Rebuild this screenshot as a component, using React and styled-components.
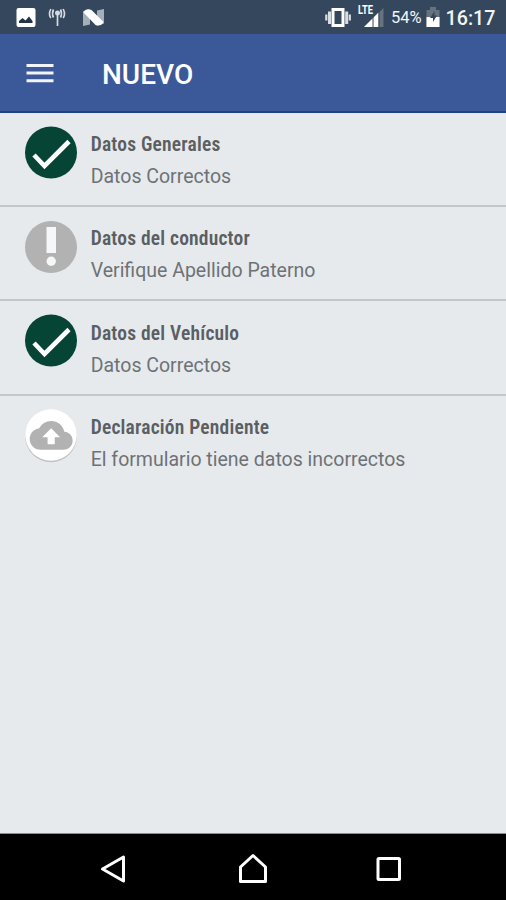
import React from "react";
import styled, { createGlobalStyle } from "styled-components";

const GlobalStyle = createGlobalStyle`
  * { box-sizing: border-box; }
  body { margin: 0; background: #e6eaed; font-family: Roboto, sans-serif; }
  svg { display: block; flex: none; }
`;

const Screen = styled.div`
  display: flex;
  flex-direction: column;
  width: 506px;
  height: 900px;
  background: #e6eaed;
  overflow: hidden;
`;

const StatusBar = styled.header`
  display: flex;
  align-items: center;
  justify-content: space-between;
  height: 34px;
  flex: none;
  background: #35475d;
  color: #f2f5f8;
`;

const StatusText = styled.span`
  width: ${(p) => p.$width}px;
  font-size: ${(p) => p.$size}px;
  font-weight: ${(p) => p.$weight};
  line-height: 34px;
  padding-top: ${(p) => p.$drop}px;
  height: 34px;
  white-space: nowrap;
`;

const AppBar = styled.div`
  display: flex;
  align-items: center;
  height: 79px;
  flex: none;
  padding-left: 26px;
  background: #3b5999;
  border-bottom: 2px solid #1e4289;
`;

const MenuButton = styled.button`
  padding: 0;
  border: 0;
  background: none;
  width: 76px;
`;

const Title = styled.h1`
  margin: 0;
  padding-top: 5px;
  font-size: 28px;
  font-weight: 500;
  line-height: 34px;
  color: #fff;
`;

const List = styled.main`
  flex: 1;
`;

const Row = styled.section`
  display: flex;
  height: 94.2px;
  padding: 13px 0 0 24px;
  gap: 12.7px;
  border-bottom: ${(p) => (p.$last ? "0" : "2px solid #c3c7cc")};
`;

const RowText = styled.div`
  padding-top: 7.3px;
`;

const RowTitle = styled.h2`
  margin: 0;
  font-family: "Roboto Condensed", Roboto, sans-serif;
  font-stretch: 75%;
  font-size: 19.5px;
  font-weight: 600;
  line-height: 24px;
  letter-spacing: 0.2px;
  color: #5b5e62;
  white-space: nowrap;
`;

const RowDetail = styled.p`
  margin: 8px 0 0;
  font-size: 19.5px;
  font-weight: 400;
  line-height: 24px;
  color: #6e7276;
  white-space: nowrap;
`;

const NavBar = styled.nav`
  display: flex;
  align-items: center;
  justify-content: space-between;
  height: 67px;
  flex: none;
  padding: 4px 103px 0 99px;
  background: #000;
  border-top: 1px solid #8b8d8f;
`;

const LeftStatus = () => (
  <svg width="120" height="34" viewBox="0 0 120 34">
    <rect x="16.5" y="8" width="19" height="19" rx="2" fill="#fff" />
    <path d="M19 23v-2l3.500-3 3 2.500 3.500-4 3.500 4.500v2z" fill="#22354b" />
    <g fill="none" stroke="#d5dae0" strokeWidth="1.700">
      <path d="M53.500 9.500c-1.500 3-1.500 5 0 8M50.800 9c-1.700 3.500-1.700 6.500 0 9M60.500 9.500c1.500 3 1.500 5 0 8M63.200 9c1.700 3.500 1.700 6.500 0 9M57.500 14v12" />
    </g>
    <circle cx="57.500" cy="13" r="2.500" fill="#d5dae0" />
    <path d="M83 11l7-1.500v15l-7 1.500zM97 10.500l7-1.500v14.500l-7 2z" fill="#a5afb9" />
    <path d="M83.500 12.500q2.500-5 8-2.500L103.500 22q-2.500 5-8 3z" fill="#fff" />
  </svg>
);

const StatusRight = styled.div`
  display: flex;
  align-items: center;
`;

const VibrateIcon = () => (
  <svg width="31" height="34" viewBox="324 0 31 34">
    <rect x="333" y="9.500" width="10" height="16" fill="none" stroke="#fff" strokeWidth="3" />
    <path d="M329.500 11.500v12.500M346.700 11.500v12.500" stroke="#d8dde2" strokeWidth="3" />
    <path d="M326.300 14.500v6M349.800 14.500v6" stroke="#d8dde2" strokeWidth="2.200" />
  </svg>
);

const SignalIcon = () => (
  <svg width="36" height="34" viewBox="355 0 36 34">
    <text x="358" y="13.500" fill="#fff" fontFamily="Roboto, sans-serif" fontSize="12" fontWeight="700" textLength="15" lengthAdjust="spacingAndGlyphs">LTE</text>
    <path d="M383.500 8v19H364z" fill="#66737f" />
    <path d="M378.500 12.500v14.500H364z" fill="#fff" />
    <path d="M373 16v11M379 9v18" stroke="#35475d" strokeWidth="1" />
  </svg>
);

const BatteryIcon = () => (
  <svg width="21.5" height="34" viewBox="424 0 21.5 34">
    <path d="M426.500 10h3.500V7h6v3h3.500v17h-13z" fill="#66737f" />
    <path d="M426.500 17h13v10h-13z" fill="#fff" />
    <path d="M434.500 11l-4.500 7h3v4l4-6.500h-2.500z" fill="#35475d" />
  </svg>
);

const MenuIcon = () => (
  <svg width="28" height="22" viewBox="0 0 28 22">
    <path d="M.5 3.500h27M.5 11h27M.5 18.800h27" stroke="#f2f4f9" strokeWidth="3" />
  </svg>
);

const CheckIcon = () => (
  <svg width="54" height="54" viewBox="0 0 54 54">
    <circle cx="27" cy="26.500" r="26" fill="#064436" />
    <path d="M10 29l10.500 11L45 15.500" fill="none" stroke="#fff" strokeWidth="4.600" />
  </svg>
);

const AlertIcon = () => (
  <svg width="54" height="54" viewBox="0 0 54 54">
    <circle cx="27" cy="27" r="26" fill="#b2b2b2" />
    <path d="M22.500 7h9.500v26h-9.500z" fill="#f6f7f8" />
    <circle cx="27.200" cy="41.300" r="4.700" fill="#f6f7f8" />
  </svg>
);

const UploadIcon = () => (
  <svg width="54" height="56" viewBox="0 0 54 56">
    <circle cx="27" cy="27.500" r="25.800" fill="#bfc3c6" />
    <circle cx="27" cy="26" r="25.800" fill="#fff" />
    <g transform="translate(5.700 4.900) scale(1.790)">
      <path d="M19.350 10.040C18.670 6.590 15.640 4 12 4 9.110 4 6.600 5.640 5.350 8.040 2.340 8.360 0 10.910 0 14c0 3.310 2.690 6 6 6h13c2.760 0 5-2.240 5-5 0-2.640-2.050-4.780-4.650-4.960zM14 13v4h-4v-4H7l5-5 5 5h-3z" fill="#b2b2b2" />
    </g>
  </svg>
);

const BackIcon = () => (
  <svg width="28" height="32" viewBox="0 0 28 32">
    <path d="M24.500 4v24L3.500 16z" fill="none" stroke="#fff" strokeWidth="3" strokeLinejoin="round" />
  </svg>
);

const HomeIcon = () => (
  <svg width="32" height="32" viewBox="0 0 32 32">
    <path d="M6 28.500V14L18.500 2.500 31 14v14.500z" fill="none" stroke="#fff" strokeWidth="3" strokeLinejoin="round" overflow="visible" transform="translate(-.5 0)" />
  </svg>
);

const RecentIcon = () => (
  <svg width="28" height="28" viewBox="0 0 28 28">
    <rect x="3" y="3.500" width="21.500" height="21" rx="1" fill="none" stroke="#fff" strokeWidth="3" />
  </svg>
);

const sections = [
  { title: "Datos Generales", detail: "Datos Correctos", Icon: CheckIcon },
  { title: "Datos del conductor", detail: "Verifique Apellido Paterno", Icon: AlertIcon },
  { title: "Datos del Vehículo", detail: "Datos Correctos", Icon: CheckIcon },
  { title: "Declaración Pendiente", detail: "El formulario tiene datos incorrectos", Icon: UploadIcon },
];

export default function App() {
  return (
    <Screen>
      <GlobalStyle />
      <StatusBar>
        <LeftStatus />
        <StatusRight>
          <VibrateIcon />
          <SignalIcon />
          <StatusText $width={33} $size={16.5} $weight={400} $drop={1}>54%</StatusText>
          <BatteryIcon />
          <StatusText $width={60.5} $size={19.7} $weight={500} $drop={2}>16:17</StatusText>
        </StatusRight>
      </StatusBar>
      <AppBar>
        <MenuButton aria-label="Menú"><MenuIcon /></MenuButton>
        <Title>NUEVO</Title>
      </AppBar>
      <List>
        {sections.map(({ title, detail, Icon }, i) => (
          <Row key={title} $last={i === sections.length - 1}>
            <Icon />
            <RowText>
              <RowTitle>{title}</RowTitle>
              <RowDetail>{detail}</RowDetail>
            </RowText>
          </Row>
        ))}
      </List>
      <NavBar>
        <BackIcon />
        <HomeIcon />
        <RecentIcon />
      </NavBar>
    </Screen>
  );
}
